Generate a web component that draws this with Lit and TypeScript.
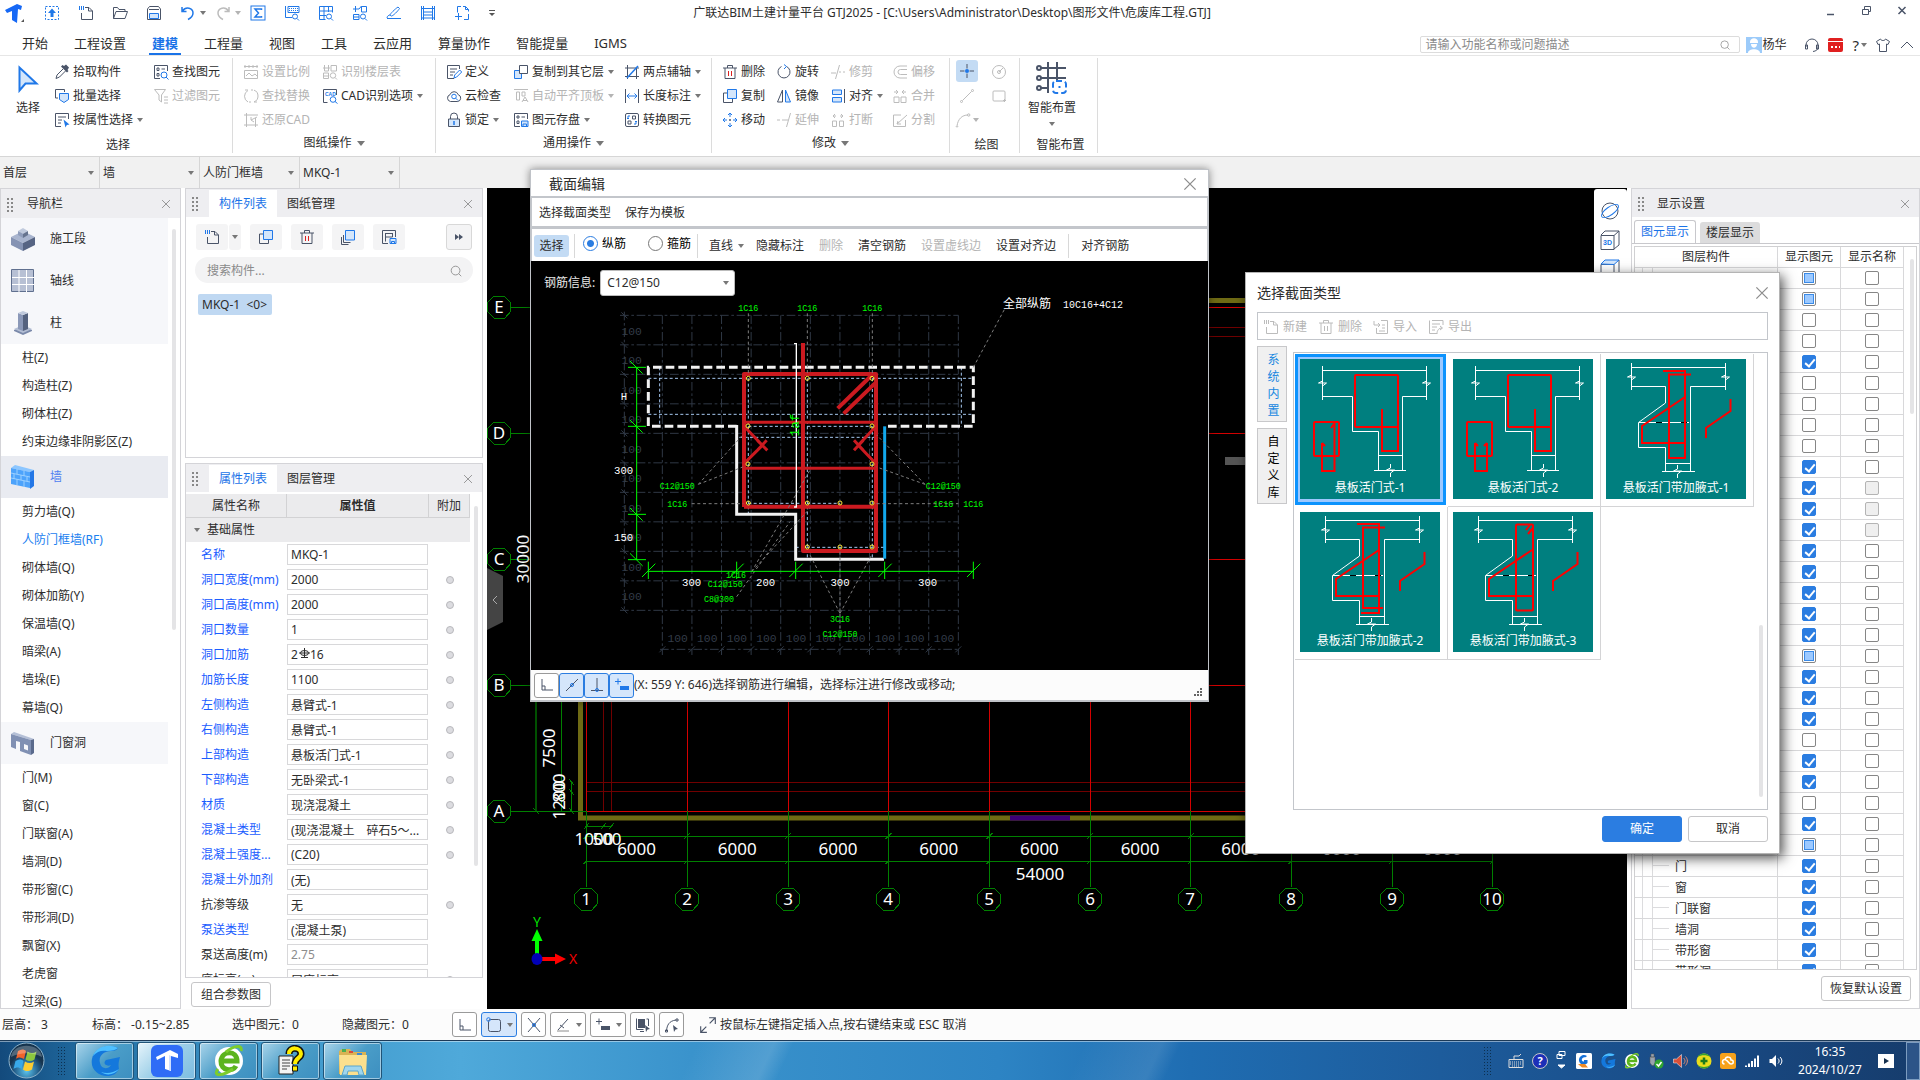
import { LitElement, html, svg, css, nothing } from "lit";
import { customElement, state } from "lit/decorators.js";
import { classMap } from "lit/directives/class-map.js";

/* ---------- icons: 16 x 16 line drawings ---------- */
/* k: slate stroke, b: blue stroke, g: grey stroke, f*: fills */
const ICONS: Record<string, unknown> = {
  pick: svg`<path class="fk" d="M10 2l2-1.5 3 3L13.500 6l1 1-1.5 1.5-6-6L8.500 1z"/><path class="k" d="M9 5L3 11l-1 3.500L5.500 13l6-6"/>`,
  batch: svg`<path class="k" d="M4 10H1.500V1.500h9V4"/><path class="fl" d="M5.500 5.500h9v6l-4.500 3-4.500-3z"/>`,
  byprop: svg`<path class="k" d="M14.500 7V1.500h-13v13H7M4 5h8M4 8h4M4 11h3"/><path class="fb" d="M9.500 7.500l6 5-2.700.4L11.500 15.500z"/>`,
  find: svg`<path class="k" d="M7 14.500H1.500v-13h13V7M4 4h2v2.500H4zM4 9.500h2V12H4zM8.500 5H12"/><circle class="b" cx="11" cy="11" r="3"/><path class="b" d="M13 13l2.500 2.500"/>`,
  filter: svg`<path class="g" d="M1.500 1.500h11L8.500 7v7L6 12V7zM11 9h4M11 12h4M11 15h4"/>`,
  scale: svg`<path class="g" d="M1 2.500h14M2 1v3M6 1v3M10 1v3M14 1v3M1.500 6.500h13v8h-13zM3 12l3-3 3 3 3-2 2 2"/>`,
  replace: svg`<path class="g" d="M5 14A6.500 6.500 0 0 1 5 2.500M11 2a6.500 6.500 0 0 1 0 12M5 2l-3 0M11 14h3M8 2h2M6 14h2"/>`,
  restore: svg`<path class="g" d="M1 3h14M3.500 1v14M1 13h14M12.500 6v9M14 5L8 8l3 2M8 8v-3"/>`,
  floor: svg`<path class="g" d="M2.500 1v6h4V1M1 4h7M9 1.500h5.500V7H9zM1.500 9h5v5.500h-5zM1.500 12h5"/><circle class="g" cx="11" cy="11.500" r="2.700"/><path class="g" d="M13 13.500l2 2"/>`,
  cad: svg`<path class="k" d="M5.500 14.500h-4v-13h13V7"/><text x="3" y="8" class="cadtxt">CAD</text><circle class="b" cx="11" cy="11.500" r="2.800"/><path class="b" d="M13 13.500l2.500 2"/>`,
  define: svg`<path class="k" d="M8 14.500H1.500v-13h12V5M4 5h7M4 8h5M4 11h3"/><path class="b" d="M8 14l.7-3 5-5 2 2-5 5z"/>`,
  cloud: svg`<path class="k" d="M4.500 13.500a3.500 3.500 0 0 1-.5-6.800 4.300 4.300 0 0 1 8.200 0 3.500 3.500 0 0 1-.4 6.800z"/><circle class="b" cx="8" cy="8.500" r="2.300"/><path class="b" d="M9.700 10.200L12 12.500"/>`,
  lock: svg`<path class="k" d="M4.500 7V4.500a3.500 3.500 0 0 1 7 0V7"/><path class="fl2" d="M2.500 7h11v7.500h-11z"/><path class="b w2" d="M8 9v4"/>`,
  copyto: svg`<path class="fl" d="M1.500 6.500h7v8h-7z"/><path class="k wf" d="M6.500 1.500h8v8h-8z"/>`,
  flush: svg`<path class="g" d="M1 1.500h14M3.500 4h3v8h-3zM9 4h3v4H9zM9 14l3-5 3 5M10 12.500h4"/>`,
  save: svg`<path class="k" d="M7 14.500H1.500v-13h13V7M4 4h2v2H4zM4 9h2v2.500H4zM8.500 5H12"/><path class="fl" d="M8.500 9h6.500v5.500H8.500zM10 12h3.500v2.500H10z"/>`,
  twopt: svg`<path class="k" d="M1 4h14M3.500 1v14M1 12.500h14M12.500 4v11"/><path class="b w2" d="M3 14L14 2"/>`,
  length: svg`<path class="k" d="M1.500 1v14M14.500 1v14"/><path class="b" d="M3 8h10M5.500 5.500L3 8l2.500 2.500M10.500 5.500L13 8l-2.500 2.500"/>`,
  convert: svg`<rect class="k" x="1.500" y="1.500" width="13" height="13" rx="1.500"/><path class="k" d="M8.500 4h3v3h-3zM4 9h3v3H4z"/><path class="b" d="M6 4H4v3M10 12h2V9M3 6l1 1 1-1M11 10l1-1 1 1"/>`,
  del: svg`<path class="k" d="M1 4h14M5.500 4V1.500h5V4M3 4v10.500h10V4"/><path class="r" d="M6.500 7v5M9.500 7v5"/>`,
  delg: svg`<path class="g" d="M1 4h14M5.500 4V1.500h5V4M3 4v10.500h10V4M6.500 7v5M9.500 7v5"/>`,
  copy: svg`<path class="k" d="M5 5H1.500v9.500h9V11"/><path class="fl" d="M5.500 1.500h9v9h-9z"/>`,
  copies: svg`<path class="k" d="M3.500 6v7.500h7M1.500 8v7.500h7"/><path class="fl" d="M5.500 1.500h9v9.500h-9z"/>`,
  move: svg`<path class="b" d="M8 1v4M8 11v4M1 8h4M11 8h4M6 3l2-2 2 2M6 13l2 2 2-2M3 6L1 8l2 2M13 6l2 2-2 2"/><path class="k" d="M8 7v2M7 8h2"/>`,
  rotate: svg`<path class="k" d="M5.500 2.500a6 6 0 1 0 5 0"/><path class="b" d="M8 .5l2.500 2L8 5"/>`,
  mirror: svg`<path class="k" d="M6.500 2v12h-5z"/><path class="fl" d="M9.500 2v12h5z"/>`,
  extend: svg`<path class="g" d="M1 8h3M6 8h6M14.500 1l-4 14"/>`,
  trim: svg`<path class="g" d="M1 9h5M9.500 1l-4 14M9 8h2M13 8h2"/>`,
  align: svg`<path class="fl" d="M2.500 2h9v4.500h-9zM2.500 9.500h9V14h-9z"/><path class="k" d="M14.500 1v14"/>`,
  brk: svg`<path class="g" d="M2.500 9h4v5.500h-4zM9.500 9h4v5.500h-4zM3 4h3M3 4l2-2M3 4l2 2M13 4h-3M13 4l-2-2M13 4l-2 2"/>`,
  offset: svg`<path class="g" d="M15 2H8a6 6 0 0 0 0 12h7M15 5.500H8.500a2.500 2.500 0 0 0 0 5H15"/>`,
  merge: svg`<path class="g" d="M2 9h5v5.500H2zM9 9h5v5.500H9zM2 4h4M6 4L4 2M6 4L4 6M14 4h-4M10 4l2-2M10 4l2 2"/>`,
  split: svg`<path class="g" d="M9 3H1.500v11.500h12V8M5 12l10-9M5 12l1-3M5 12l4 0"/>`,
  circle: svg`<circle class="g" cx="8" cy="8" r="6.500"/><path class="g" d="M8 8l4-4M6.500 8a1.500 1.500 0 1 0 3 0 1.500 1.500 0 1 0-3 0"/>`,
  point: svg`<path class="k" d="M8 1v4.500M8 10.500V15M1 8h4.500M10.500 8H15"/><circle class="fb" cx="8" cy="8" r="2"/>`,
  line: svg`<path class="g" d="M3.500 12.500l9-9M1.500 13.500a1 1 0 1 0 2 0 1 1 0 1 0-2 0M12.500 2.500a1 1 0 1 0 2 0 1 1 0 1 0-2 0"/>`,
  rect: svg`<rect class="g" x="2" y="3" width="12" height="10" rx="1"/><path class="g" d="M12 12.500h3M13.500 11v3"/>`,
  arc: svg`<path class="g" d="M2 14C3 7 7 3 13 3M1 14a1 1 0 1 0 2 0M12.500 3a1.200 1.200 0 1 0 2.400 0 1.200 1.200 0 1 0-2.400 0"/>`,
  newf: svg`<path class="k" d="M7 2.500h4l3.500 3.500v8.500h-11V8M10.500 2.500V6h4"/><path class="b" stroke-dasharray="1 1" d="M1 1.500h5M1 2.500h5M1 3.500h5M1 4.500h5"/>`,
  newg: svg`<path class="g" d="M7 2.500h4l3.500 3.500v8.500h-11V8M10.500 2.500V6h4"/><path class="g" stroke-dasharray="1 1" d="M1 1.500h5M1 2.500h5M1 3.500h5M1 4.500h5"/>`,
  impg: svg`<path class="g" d="M8 1.500h6.500v13h-11V9M1 2v4h6M5 4l2 2-2 2M9 6h3M9 9h3M6 12h6"/>`,
  expg: svg`<path class="g" d="M9 14.500H1.500v-13M4 1.500h11V6M4 5h8M4 8h5M4 11h3M9 15c0-4 2-6 5-6M12 7l2.500 2L12 11"/>`,
  tmpl: svg`<path class="k" d="M7 14.500H1.500v-13h13V8M4 4.500h8M4.500 8h7V4.500M4.500 4.500v8"/><path class="fl" d="M9 9.500h6v5H9zM10.500 12.500h3v2h-3z"/>`,
  search: svg`<circle class="m" cx="7.500" cy="7.500" r="5"/><path class="m" d="M11 11l3 3"/>`,
  up: svg`<rect class="b" x="1.500" y="1.500" width="13" height="13" stroke-dasharray="2 1.500"/><path class="fb" d="M8 3.500L12 8H9.500v4h-3V8H4z"/>`,
  open: svg`<path class="k" d="M1.500 13.500v-11h4l1.500 2h6v2M1.500 13.500L4 6.500h11.500L13 13.500z"/>`,
  disk: svg`<path class="k" d="M1.500 4l2-2.500h9l2 2.500v10.500h-13zM3 4.500h10"/><path class="fl" d="M3.500 8.500h9v5h-9z"/>`,
  undo: svg`<path class="b w2" d="M2 2v4.500h4.500M2.500 6C6 1 13 3 13 8c0 4-3 5.500-5 6.500"/>`,
  redo: svg`<path class="g w2" d="M14 2v4.500H9.500M13.500 6C10 1 3 3 3 8c0 4 3 5.500 5 6.500"/>`,
  sum: svg`<rect class="b" x="1" y="1" width="14" height="14"/><path class="b w2" d="M11.500 5V4H5l3.500 4L5 12h6.500v-1"/>`,
  q1: svg`<path class="b" d="M1.500 1v11.500H8M4 1.500h11v6H4z"/><path class="b" stroke-dasharray="1 1" d="M5 3.500h9M5 5.500h9"/><circle class="b" cx="11" cy="11.500" r="2.500"/><path class="b" d="M13 13.500l2 2"/>`,
  q2: svg`<path class="b" d="M1.500 1.500h13v6M1.500 1.500v13h6M1.500 6h13M1.500 10.500H8M6 1.500v13M10.500 1.500V7"/><circle class="b" cx="11" cy="11.500" r="2.500"/><path class="b" d="M13 13.500l2 2"/>`,
  q3: svg`<path class="b" d="M3.500 1v6M1 4h6M9.500 1.500h5V7h-5zM1.500 9.500h5.500v5H1.500zM9.500 1L7 4M1 12h6"/><circle class="b" cx="11" cy="11.500" r="2.500"/><path class="b" d="M13 13.500l2 2"/>`,
  pen: svg`<path class="b" d="M1 13.500h14M4 10c0-1 5-6 8-8l1.500 1.500C12 6 7 11 5.500 11zM1 13c0-2 2-3 3-3"/>`,
  fence: svg`<path class="b" d="M3.500 1v14M12.500 1v14M1 3.500h14M3 7h10M3 10h10M1 13h14M1.500 1v14M14.500 1v14"/>`,
  frame: svg`<path class="b" d="M7 1.500H3.500v6M9 1.500h2.500l3 3v2M11.500 1.500v3h3M14.500 9v5.500H10M1 11.500h7M4.500 8v7"/>`,
  ortho: svg`<path class="k" d="M3 2v11h11M3 9h3v4"/>`,
  slash: svg`<path class="k" d="M2 14L14 2"/><circle class="b" cx="8" cy="8" r="1.500"/>`,
  perp: svg`<path class="k" d="M8 1v12M2 13.500h12"/><circle class="b" cx="8" cy="13" r="1.500"/>`,
  plusbar: svg`<path class="b" d="M1 4.500h6M4 1.500v6"/><path class="fb" d="M6 9h9v4H6z"/>`,
  plusbark: svg`<path class="k" d="M1 4.500h6M4 1.500v6"/><path class="fk" d="M6 9h9v4H6z"/>`,
  snap: svg`<rect class="k" x="2.500" y="2.500" width="12" height="12" rx="2"/><circle class="b" cx="2.500" cy="2.500" r="1.800"/>`,
  cross: svg`<path class="k" d="M2 1l12 14M14 1L2 15"/><circle class="b" cx="8" cy="8" r="1.500"/>`,
  angle: svg`<path class="k" d="M13 2L3 13M5 8l4 3"/><path class="m" d="M2 14h12"/>`,
  layers: svg`<path class="fk" d="M3 2h7v9H3z"/><path class="k" d="M1.500 1.500v11h7M5 14.500h4M11.500 2h2v7"/><path class="fk" d="M10 8l5 4-2.500.5L11 15z"/>`,
  curve: svg`<path class="k" d="M2.500 14C3 8 5 4 12 3M1.500 13h2v2h-2zM12 2h2v2h-2z"/><path class="fk" d="M9 8l5 4-2.500.5L10 15z"/>`,
  expand: svg`<path class="k" d="M2 14L6.500 9.500M9.500 6.500L14 2M9 1.500h5.500V7M1.500 9v5.500H7"/>`,
  headset: svg`<path class="k" d="M2 10V8a6 6 0 0 1 12 0v2c0 3-2 4-5 4.500M1.500 8h2v4h-2zM12.500 8h2v4h-2z"/>`,
  shirt: svg`<path class="k" d="M5.500 2L1.500 4.500l1.500 3 1.500-.5v7.500h7V7l1.500.5 1.500-3L10.500 2C10 4 6 4 5.500 2z"/>`,
  chevup: svg`<path class="k" d="M2 11l6-6 6 6"/>`,
  close: svg`<path class="m" d="M3.500 3.500l9 9M12.500 3.500l-9 9"/>`,
};
const icon = (name: string, size = 16) =>
  html`<svg class="ic" width=${size} height=${size} viewBox="0 0 16 16" aria-hidden="true">${ICONS[name]}</svg>`;
const caret = html`<span class="caret"></span>`;

type Cmd = { i: string; t: string; off?: boolean; more?: boolean };
const c = (i: string, t: string, off = false, more = false): Cmd => ({ i, t, off, more });

const GROUPS: { cls: string; label: string; cols: Cmd[][] }[] = [
  { cls: "g2", label: "图纸操作", cols: [
    [c("scale", "设置比例", true), c("replace", "查找替换", true), c("restore", "还原CAD", true)],
    [c("floor", "识别楼层表", true), c("cad", "CAD识别选项", false, true)]] },
  { cls: "g3", label: "通用操作", cols: [
    [c("define", "定义"), c("cloud", "云检查"), c("lock", "锁定", false, true)],
    [c("copyto", "复制到其它层", false, true), c("flush", "自动平齐顶板", true, true), c("save", "图元存盘", false, true)],
    [c("twopt", "两点辅轴", false, true), c("length", "长度标注", false, true), c("convert", "转换图元")]] },
  { cls: "g4", label: "修改", cols: [
    [c("del", "删除"), c("copy", "复制"), c("move", "移动")],
    [c("rotate", "旋转"), c("mirror", "镜像"), c("extend", "延伸", true)],
    [c("trim", "修剪", true), c("align", "对齐", false, true), c("brk", "打断", true)],
    [c("offset", "偏移", true), c("merge", "合并", true), c("split", "分割", true)]] },
];
const TABS = ["开始", "工程设置", "建模", "工程量", "视图", "工具", "云应用", "算量协作", "智能提量", "IGMS"];

const NAV: { name: string; art: string; items: string[] }[] = [
  { name: "施工段", art: "block", items: [] },
  { name: "轴线", art: "grid", items: [] },
  { name: "柱", art: "column", items: ["柱(Z)", "构造柱(Z)", "砌体柱(Z)", "约束边缘非阴影区(Z)"] },
  { name: "墙", art: "wall", items: ["剪力墙(Q)", "人防门框墙(RF)", "砌体墙(Q)", "砌体加筋(Y)", "保温墙(Q)", "暗梁(A)", "墙垛(E)", "幕墙(Q)"] },
  { name: "门窗洞", art: "door", items: ["门(M)", "窗(C)", "门联窗(A)", "墙洞(D)", "带形窗(C)", "带形洞(D)", "飘窗(X)", "老虎窗", "过梁(G)"] },
];
const ART: Record<string, unknown> = {
  block: svg`<path fill="#a9b5cf" d="M0 10l12-6 12 6-12 6z"/><path fill="#8593b3" d="M0 10l12 6v8L0 18z"/><path fill="#566483" d="M24 10l-12 6v8l12-6z"/><path fill="#c0cadd" d="M7 4l5-3 5 3-5 3z"/><path fill="#8f9dbb" d="M7 4l5 3v4L7 8z"/><path fill="#66748f" d="M17 4l-5 3v4l5-3z"/>`,
  grid: svg`<path fill="#b7c0d4" stroke="#60708f" d="M.5.500h22v22H.5z"/><path stroke="#fff" d="M8 1v22M15.500 1v22M1 8.500h22M1 15.500h22"/>`,
  column: svg`<path fill="#7a89aa" d="M3 19l9-4 9 4v1l-9 4-9-4z"/><path fill="#b3bed4" d="M3 18l9-4 9 4-9 4z"/><path fill="#8a98b8" d="M7 2l5 2v16l-5-2z"/><path fill="#54627f" d="M17 2l-5 2v16l5-2z"/><path fill="#c0cadd" d="M7 2l5-2 5 2-5 2z"/>`,
  wall: svg`<path fill="#8cc6ff" d="M0 3l4-3 19 5-4 2z"/><path fill="#4da3fb" d="M0 3l19 4v16L0 19z"/><path fill="#2477e6" d="M19 7l4-2v16l-4 3z"/><path stroke="#9bd0ff" fill="none" d="M0 8l19 4M0 13l19 4M6 4v5M13 6v5M3 9v5M10 10v5M16 12v4M6 14v6M13 16v6"/>`,
  door: svg`<path fill="#b4bfd6" d="M0 3l3-2 20 7-3 1z"/><path fill="#8090b3" d="M0 3l20 6v15L9 20v-9l-4-1v8l-5-2zM13 13v5l4 1.500v-5z" fill-rule="evenodd"/><path fill="#5a6a8c" d="M20 9l3-1v14l-3 2z"/>`,
};

type Prop = { k: string; v: string; dot?: boolean; plain?: boolean; rebar?: boolean; ghost?: boolean };
const PROPS: Prop[] = [
  { k: "名称", v: "MKQ-1" },
  { k: "洞口宽度(mm)", v: "2000", dot: true },
  { k: "洞口高度(mm)", v: "2000", dot: true },
  { k: "洞口数量", v: "1", dot: true },
  { k: "洞口加筋", v: "", dot: true, rebar: true },
  { k: "加筋长度", v: "1100", dot: true },
  { k: "左侧构造", v: "悬臂式-1", dot: true },
  { k: "右侧构造", v: "悬臂式-1", dot: true },
  { k: "上部构造", v: "悬板活门式-1", dot: true },
  { k: "下部构造", v: "无卧梁式-1", dot: true },
  { k: "材质", v: "现浇混凝土", dot: true },
  { k: "混凝土类型", v: "(现浇混凝土　碎石5～...", dot: true },
  { k: "混凝土强度...", v: "(C20)", dot: true },
  { k: "混凝土外加剂", v: "(无)" },
  { k: "抗渗等级", v: "无", dot: true, plain: true },
  { k: "泵送类型", v: "(混凝土泵)" },
  { k: "泵送高度(m)", v: "2.75", plain: true, ghost: true },
  { k: "底标高(m)", v: "层底标高", plain: true, dot: true },
];

/* one letter per layer: p partly shown, 1 shown, 0 hidden */
const LAYER_STATE = "pp0010000111111111p11101101p111111";
const LAYER_NAMES: Record<number, string> = { 28: "门", 29: "窗", 30: "门联窗", 31: "墙洞", 32: "带形窗", 33: "带形洞" };
const LAYERS = [...LAYER_STATE].map((shown, n) => ({ name: LAYER_NAMES[n] ?? "", shown, locked: n >= 10 && n <= 12 }));

const THUMBS = ["悬板活门式-1", "悬板活门式-2", "悬板活门带加腋式-1", "悬板活门带加腋式-2", "悬板活门带加腋式-3"];

const zig = (x: number, y: number) => svg`<path d="M${x} ${y - 6}v4l-4 2h8l-4 3v4"/>`;
const thumbArt = (n: number) => n < 2
  ? svg`<g class="tw"><path d="M22.500 7v34M126.500 7v34M22.500 11.500h104M22.500 37.500H52.500V72.500H78.500V111.500M102.500 111.500V37.500H126.500M78.500 96.500h24M74 111.500h32"/>${zig(22.5, 24)}${zig(126.5, 24)}${zig(90.5, 111)}</g>
    <g class="tr"><rect x="55" y="16" width="43" height="52" rx="1"/><path d="M82 50v42h16V68"/><rect x="14" y="63" width="25" height="34" rx="1"/>${n === 0
      ? svg`<path d="M22 84v28h12.500V64M22 84l3 3M34 65l-3 4"/>`
      : svg`<path d="M22 84v28h12V84M22 84l3 3M34 84l-3 3"/>`}</g>`
  : svg`<g class="tw"><path d="M25.500 4v27M119.500 4v27M25.500 8.500h94M25.500 27.500H59.500V44L32.500 63.500V88.500H59.500V112M119.500 27.500H84.500V112M59.500 104.500h25M56 112.500h33M33 63.500h50"/>${zig(25.5, 18)}${zig(119.5, 18)}${zig(71.5, 112)}</g>
    <path stroke="#000" d="M50 63.500h6M75 63.500h6"/>
    <g class="tr"><path d="M79 38L36 67V84H79M124.500 40V52L100 69V79"/>${n === 2
      ? svg`<path d="M57 12h22v87H63V15.500h22"/>`
      : n === 3 ? svg`<path d="M57 12h22v89H61M85 15.500H63V96h20"/>`
      : svg`<rect x="63" y="12.500" width="17" height="86" rx="1"/><path d="M73 18l4-5M75 22l5-6"/>`}</g>`;

/* ---------- model view ---------- */
const AXIS = Array.from({ length: 10 }, (_, n) => 586.6 + 100.7 * n);
const ROWS: [string, number][] = [["E", 307], ["D", 433], ["C", 559], ["B", 685], ["A", 811]];
const bubble = (x: number, y: number, t: string) => svg`
  <polygon class="ln gr" points="${x - 5},${y - 11} ${x + 5},${y - 11} ${x + 11},${y - 5} ${x + 12},${y + 4} ${x + 6},${y + 11} ${x - 5},${y + 11} ${x - 12},${y + 4} ${x - 11},${y - 5}"/>
  <text class="mt" x=${x} y=${y + 6}>${t}</text>`;
const modelView = () => svg`
<g transform="translate(-487,-188)">
  <g class="ln dr"><path d="M586 327H1627M586 336H1627M586 782.500H1627M586 791.500H1627M603.500 307V811M611.500 307V811M1090.500 307V811"/></g>
  <g class="ln rd">
    ${AXIS.map((x) => svg`<path d="M${x} 307V811"/>`)}
    ${ROWS.map(([, y]) => svg`<path d="M586 ${y}.500H1627"/>`)}
  </g>
  <path d="M580.500 301V818H1560M578 300.500H1560" fill="none" stroke="#6e6a14" stroke-width="5"/>
  <path d="M1010 818H1070" stroke="#3c0078" stroke-width="5"/>
  <g class="ln gr">
    ${ROWS.map(([, y]) => svg`<path d="M511 ${y}.500H586"/>`)}
    ${AXIS.map((x) => svg`<path d="M${x} 811V887M${x - 3} 839l6-6M${x - 3} 864l3-3"/>`)}
    <path d="M586 836.500H1493M586 861.500H1493M586 826.500H611M584 829l5-6M601 829l5-6M609 829l5-6M561.500 307V811M571.500 782V811M569 779l5 6M569 789l5 6M569 808l5 6M533 808l6 6"/>
    <path d="M536 307V811" stroke-width="2" stroke="#005000"/>
  </g>
  ${ROWS.map(([t, y]) => bubble(499, y, t))}
  ${AXIS.map((x, n) => bubble(Math.floor(x), 899, String(n + 1)))}
  ${AXIS.slice(0, 9).map((x) => svg`<text class="mt" x=${x + 50} y="855">6000</text>`)}
  <text class="mt" x="1040" y="880">54000</text>
  <text class="mt" x="594" y="845">1000</text><text class="mt" x="607" y="845">500</text>
  <text class="mt" transform="translate(529,559) rotate(-90)">30000</text>
  <text class="mt" transform="translate(555,748) rotate(-90)">7500</text>
  <text class="mt" transform="translate(565,800) rotate(-90)">1200</text>
  <text class="mt" transform="translate(565,788) rotate(-90)">800</text>
  <path d="M1225 457h20v8h-20z" fill="#555"/>
  <path d="M487 568l16 8v46l-16 8z" fill="#444"/><path d="M497 596l-4 4 4 4" fill="none" stroke="#aaa"/>
  <path d="M537 955V939" stroke="#0f0" stroke-width="4"/><path d="M537 929l5.500 12h-11z" fill="#0f0"/>
  <path d="M540 959H556" stroke="red" stroke-width="4"/><path d="M566 959l-11-5.500v11z" fill="red"/>
  <ellipse cx="537" cy="959" rx="5.500" ry="6" fill="#0000b8"/>
  <text class="mt ax ay" x="537" y="927">Y</text><text class="mt ax" x="573" y="964">X</text>
</g>`;

/* ---------- section drawing, drafted at three units a pixel ---------- */
const section = () => {
  const gx = Array.from({ length: 11 }, (_, n) => 157 + 88.8 * n);
  const gy = Array.from({ length: 11 }, (_, n) => 61 + 88.5 * n);
  const dots: [number, number][] = [[415, 250], [592, 250], [786, 250], [414, 393], [786, 393], [414, 507], [786, 507], [415, 624], [592, 624], [690, 624], [786, 624], [592, 756], [690, 756], [786, 756]];
  return svg`
<g transform="translate(79,34) scale(.33333)" fill="none">
  <g stroke="#2f3845" stroke-width="3">
    <g stroke-dasharray="26 8 8 8">${gx.map((x) => svg`<path d="M${x} 61V1080"/>`)}${gy.map((y) => svg`<path d="M30 ${y}H1045"/>`)}<path d="M43 50V950M150 1063H1050"/></g>
    ${gx.map((x) => svg`<path d="M${x - 9} 1072l18-18"/>`)}${gy.map((y) => svg`<path d="M34 ${y - 9}l18 18"/>`)}
  </g>
  <g class="st sg">${gx.slice(0, 10).map((x) => svg`<text x=${x + 46} y="1040">100</text>`)}${gy.slice(0, 10).map((y) => svg`<text x="65" y=${y + 58}>100</text>`)}</g>
  <g stroke="#a6c8f0" stroke-width="3" stroke-dasharray="9 7">
    <path d="M115 250H1090M115 358H1090M149 217V394M1054 217V394M415 394H786M388 427H800M415 250V655M415 625H690M592 250V790M787 250V790M557 757H822"/>
  </g>
  <g stroke="#f2f2f2" stroke-width="9"><path stroke-dasharray="26 12" d="M380 394H115V217H1090V394H822"/><path d="M380 390V658H557V793H822"/></g>
  <path d="M824 394V791" stroke="#12a8ec" stroke-width="9"/>
  <g stroke="#cb1a20" stroke-width="12" stroke-linejoin="round">
    <path d="M402 636V237H798V768H579V144M402 635H798"/>
    <path stroke-width="9" d="M402 382H798M402 520H798M408 400L457 451L408 500M442 466l28-30M442 436l30 30M792 400L745 451L792 500M732 436l28 30M760 436l-28 30"/>
    <path d="M786 240L683 340M798 262L701 356"/>
  </g>
  <g stroke="#7d7d7d" stroke-width="3" stroke-dasharray="9 8">
    <path d="M415 55V240M592 55V240M787 55V240M1090 217L1185 40M265 568L398 420M265 568L398 516M945 568L800 420M945 568L800 516M245 626H400M800 626H1045M425 830L600 525M425 830L600 640M380 905L540 680M690 955L600 780M690 955L785 780M690 770V1010"/>
  </g>
  <path d="M559 144V638M552 146h8M552 636h8" stroke="#fff" stroke-width="4"/>
  <g stroke="#ffe83b" stroke-width="3">${dots.map(([x, y]) => svg`<circle cx=${x} cy=${y} r="6"/>`)}</g>
  <g stroke="#0f0" stroke-width="3">
    <path d="M80 217V794M54 217H108M54 394H108M54 658H108M54 794H108M115 829H1090M115 800V852M380 800V852M557 800V852M824 800V852M1090 800V852"/>
    ${[217, 394, 658, 794].map((y) => svg`<path d="M60 ${y - 19}l38 38"/>`)}
    ${[115, 380, 557, 824, 1090].map((x) => svg`<path d="M${x - 19} 846l40-40"/>`)}
  </g>
  <g class="st sgr">
    <text x="415" y="47">1C16</text><text x="592" y="47">1C16</text><text x="787" y="47">1C16</text>
    <text x="202" y="581">C12@150</text><text x="202" y="635">1C16</text>
    <text x="1000" y="581">C12@150</text><text x="1000" y="635">1C16</text><text x="1090" y="635">1C16</text>
    <text x="378" y="848">1C16</text><text x="346" y="875">C12@150</text><text x="327" y="920">C8@300</text>
    <text x="690" y="980">3C16</text><text x="690" y="1026">C12@150</text>
    <text class="big" transform="translate(566,390) rotate(-90)">1af</text>
  </g>
  <g class="st sw">
    <text x="42" y="314">H</text><text x="41" y="537">300</text><text x="41" y="738">150</text>
    <text x="245" y="873">300</text><text x="467" y="873">200</text><text x="690" y="873">300</text><text x="953" y="873">300</text>
  </g>
</g>
<text class="note" x="472" y="47">全部纵筋</text><text class="note mono" x="532" y="47">10C16+4C12</text>`;
};

/* ---------- taskbar artwork, 32 x 32 ---------- */
const gcloud = svg`<path fill="#1478dc" d="M29 3C19-2 5 3 3 14c-2 10 6 17 15 17 6 0 9-2 12-7-1-5 0-8 1-12l-14 3c-4 4 1 7 5 5-3 5-10 4-11-2-2-7 4-12 11-12 4 0 6-1 7-3z"/><path fill="#4fc0ff" d="M29 3C19-2 7 2 4 11c4-5 9-6 14-5 5 0 9-1 11-3zM12 27c5 4 14 3 18-3-6 4-12 5-18 3z"/>`;
const ebrowser = svg`<circle cx="16" cy="16" r="14" fill="#fff"/><path fill="none" stroke="#5cb41e" stroke-width="5" d="M8 16h16c0-11-15-11-16 0-.5 10 12 11 15 5"/><path fill="none" stroke="#7ccc2c" stroke-width="3" d="M5 24C-1 32 10 31 20 24M28 6C30-1 20 1 13 7"/>`;
const APPS: { name: string; art: unknown; on?: boolean }[] = [
  { name: "云桌面", art: gcloud },
  { name: "土建计量", on: true, art: svg`<rect width="32" height="32" rx="6" fill="#2f6cf6"/><path fill="#fff" d="M5 12L19 5l8 4v4l-7-2v15l-6-2V11L6 15z"/><path fill="#cfe0ff" d="M20 11v15l-2-1V10z"/>` },
  { name: "浏览器", art: ebrowser },
  { name: "帮助", art: svg`<path fill="#f4f4f4" stroke="#222" d="M4 11h14v18H4z"/><path stroke="#444" d="M7 15h8M7 18h8M7 21h8M7 24h5"/><path fill="none" stroke="#111" stroke-width="7" d="M14 9c0-8 12-7 12 0 0 4-6 4-6 10"/><path fill="none" stroke="#ffee00" stroke-width="4" d="M14 9c0-8 12-7 12 0 0 4-6 4-6 10"/><path fill="#fe0" stroke="#111" d="M17.500 21h5v5h-5z"/>` },
  { name: "资源管理器", art: svg`<path fill="#d9b354" d="M2 6l3-2h8l2 3h14v22H2z"/><path fill="#4caf50" d="M5 4h4v3H5z"/><path fill="#d84a3a" d="M12 6h4v2h-4z"/><path fill="#3a8ad8" d="M20 8h5v2h-5z"/><path fill="#fbe08e" d="M2 10h28l-1 20H3z"/><path fill="#9fd6ee" stroke="#5aa6cc" d="M8 21h16l3 9h-5l-1-4H11l-1 4H5z"/>` },
];
const TRAY: { name: string; art: unknown }[] = [
  { name: "广联达云", art: svg`<rect width="32" height="32" rx="3" fill="#fff"/><path fill="#1671d8" d="M22 6C14 1 5 7 6 16c2 8 11 9 17 4v-6h-7v3c-4 1-7-5-1-8 3-1 5 0 7-3z"/><path fill="#f08a24" d="M4 22l8 7h12l-6-7z"/>` },
  { name: "云桌面", art: gcloud },
  { name: "浏览器", art: ebrowser },
  { name: "安全弹出", art: svg`<path fill="#9aa4ae" stroke="#555" d="M4 8h10v12l-3 5H8l-4-5zM6 2h6v6H6z"/><circle cx="22" cy="22" r="9" fill="#2fa52f"/><path fill="none" stroke="#fff" stroke-width="3" d="M17 22l4 4 6-8"/>` },
  { name: "音频", art: svg`<path fill="#d8503a" stroke="#fff" d="M3 12h6l10-9v26l-10-9H3z"/><path fill="none" stroke="#e08a70" stroke-width="2" d="M23 10c4 4 4 8 0 12M27 7c5 6 5 12 0 18"/>` },
  { name: "安全卫士", art: svg`<circle cx="16" cy="16" r="15" fill="#e9dc1c"/><path fill="#35a035" d="M3 8C9-2 24-1 29 8c-8-5-18-5-26 0zM3 24c6 9 21 9 26 0-8 5-18 5-26 0z"/><path stroke="#1c7a1c" stroke-width="5" d="M16 9v14M9 16h14"/>` },
  { name: "云盘", art: svg`<rect width="32" height="32" rx="5" fill="#f7a21b"/><path fill="none" stroke="#fff" stroke-width="3" d="M9 22c-6-1-5-9 1-9 2-7 12-6 12 1 6 0 6 8 0 8-5 0-6-8-11-8"/>` },
  { name: "网络", art: svg`<path fill="#fff" d="M2 25h4v3H2zM8 21h4v7H8zM14 16h4v12h-4zM20 11h4v17h-4zM26 5h4v23h-4z"/>` },
  { name: "音量", art: svg`<path fill="#fff" d="M3 12h5l8-8v24l-8-8H3z"/><path fill="none" stroke="#fff" stroke-width="2" d="M20 11c3 3 3 7 0 10M24 8c5 5 5 11 0 16"/>` },
];

@customElement("app-root")
export class AppRoot extends LitElement {
  @state() private ribbonTab = "建模";
  @state() private picked = 0;

  static styles = css`
    :host { display: block; height: 100vh; font: 12px/16px "Noto Sans", "Noto Sans CJK SC", sans-serif; color: #2d2d2d; }
    * { box-sizing: border-box; }
    button, input, select { font: inherit; color: inherit; margin: 0; padding: 0; border: 0; background: none; border-radius: 0; }
    button { white-space: nowrap; cursor: pointer; }
    a { color: inherit; text-decoration: none; }
    svg { display: block; flex: none; }
    .app { position: relative; display: flex; flex-direction: column; height: 100%; overflow: hidden; background: #fff; }
    .ic * { fill: none; stroke-width: 1; }
    .ic .k { stroke: #4a5468; } .ic .b { stroke: #2078e8; } .ic .g { stroke: #bcbcbc; } .ic .m { stroke: #8c8c8c; } .ic .r { stroke: #d22; }
    .ic .w2 { stroke-width: 1.500; } .ic .wf { fill: #fff; }
    .ic .fk { fill: #4a5468; } .ic .fb { fill: #2078e8; }
    .ic .fl { fill: #d4e6fb; stroke: #2078e8; } .ic .fl2 { fill: #d4e6fb; stroke: #4a5468; }
    .ic .cadtxt { fill: #2078e8; font: bold 5px "Liberation Sans", sans-serif; }
    .caret { display: inline-block; border: 3px solid transparent; border-top: 4px solid #777; border-bottom: 0; flex: none; }
    .row { display: flex; align-items: center; }

    /* title bar and tabs */
    .title { display: flex; align-items: center; height: 26px; flex: none; }
    .quick { display: flex; align-items: center; gap: 18px; padding-left: 4px; flex: 1; }
    .quick .pair { display: flex; align-items: center; gap: 4px; margin-right: -9px; }
    .quick .logo { margin-right: 2px; }
    .title h1 { font-size: 12px; font-weight: normal; margin: 0 10px 0 0; flex: none; }
    .wins { flex: 1; display: flex; justify-content: flex-end; gap: 20px; padding: 0 10px 4px 0; }
    .tabs { display: flex; height: 30px; padding-left: 9px; border-bottom: 1px solid #e6e6e6; flex: none; }
    .tabs nav { display: flex; flex: 1; }
    .tab { position: relative; font-size: 13px; padding: 8px 13px 0; line-height: 18px; display: block; }
    .tab.on { color: #1a73e8; font-weight: bold; }
    .tab.on::after { content: ""; position: absolute; left: 10px; right: 10px; bottom: 0; height: 2px; background: #1a73e8; }
    .user { display: flex; align-items: center; gap: 8px; padding: 8px 5px 0 0; }
    .ask { display: flex; align-items: center; width: 320px; height: 17px; border: 1px solid #dcdcdc; border-radius: 2px; padding: 0 8px 0 4px; }
    .ask input { flex: 1; min-width: 0; outline: 0; }
    .ask input::placeholder, .find input::placeholder { color: #8a8a8a; opacity: 1; }
    .who { margin: 0 10px 0 -2px; gap: 0; }
    .help { font-size: 15px; gap: 2px; }

    /* ribbon */
    .ribbon { display: flex; height: 100px; padding-top: 2px; flex: none; }
    .grp { display: flex; flex-direction: column; border-right: 1px solid #dcdcdc; margin-bottom: 4px; height: 95px; }
    .cols { display: grid; flex: 1; }
    .col { display: flex; flex-direction: column; padding-top: 2px; }
    .cmd { display: flex; align-items: center; gap: 3px; height: 24px; text-align: left; }
    .cmd .caret { margin-left: 1px; }
    .off { color: #b4b4b4; }
    .off .caret { border-top-color: #b4b4b4; }
    .cap { height: 20px; display: flex; align-items: center; justify-content: center; gap: 5px; }
    .cap .caret { border-width: 5px 4px 0; }
    .cap.low { padding: 3px 0 0 4px; }
    .g1 .cols { grid-template-columns: 44px 99px 79px; padding-left: 10px; }
    .g2 .cols { grid-template-columns: 79px 113px; padding-left: 10px; }
    .g3 .cols { grid-template-columns: 67px 111px 87px; padding-left: 10px; }
    .g4 .cols { grid-template-columns: 54px 54px 62px 56px; padding-left: 10px; }
    .g4 .cols { padding-right: 1px; }
    .g5 .cols { grid-template-columns: 32px 31px; padding-left: 6px; }
    .g6 { width: 78px; }
    .g6 .cols { padding-left: 2px; }
    .tool { width: 22px; height: 24px; display: flex; align-items: center; justify-content: center; gap: 2px; }
    .tool.on { background: #c3dbf4; border-radius: 3px; height: 22px; margin-bottom: 2px; }
    .bigcmd { display: flex; flex-direction: column; align-items: center; gap: 7px; padding-top: 7px; width: 36px; }
    .g6 .bigcmd { width: 60px; gap: 6px; padding-top: 4px; }

    /* context selectors */
    .ctx { display: flex; height: 32px; background: #f1f1f1; border-top: 1px solid #d6d6d6; flex: none; }
    .pick { display: flex; align-items: center; width: 100px; border-right: 1px solid #d6d6d6; padding: 0 5px 0 3px; }
    select { appearance: none; outline: 0; flex: 1; min-width: 0; }

    /* work area */
    .work { display: flex; flex: 1; min-height: 0; }
    .panel { position: relative; display: flex; flex-direction: column; border: 1px solid #d4d4d8; background: #fff; min-height: 0; overflow: hidden; }
    .phead { display: flex; align-items: center; height: 28px; padding: 1px 7px 0 0; background: #eeeef1; flex: none; }
    .grip { width: 8px; height: 15px; margin: 0 8px 0 5px; flex: none; background: radial-gradient(circle, #888 1px, transparent 1px) 0 0 / 4px 4px; }
    .phead .grow { flex: 1; }
    .ptab { height: 27px; padding: 0 10px; }
    .ptab.on { background: #fff; color: #1a73e8; }
    .mid .grip { margin-right: 10px; }
    .thumb { position: absolute; width: 4px; border-radius: 2px; background: #e4e4e6; }
    .navp { width: 181px; flex: none; }
    .navp .phead { height: 29px; }
    .navp .grip { margin-right: 13px; }
    .navlist { flex: 1; overflow: hidden; width: 167px; }
    .navp .thumb { right: 4px; top: 40px; height: 401px; }
    .ngrp { display: flex; align-items: center; gap: 15px; width: 100%; height: 42px; padding-left: 10px; background: #f6f7fa; }
    .ngrp.on { background: #e9ebf1; color: #4f80f0; }
    .nitem { display: flex; align-items: center; width: 100%; height: 28px; padding-left: 21px; }
    .nitem.on { color: #1a80f0; }
    .mid { width: 298px; margin: 0 4px; display: flex; flex-direction: column; flex: none; }
    .comp { flex: 0 0 270px; }
    .comp .bar { display: flex; gap: 9px; padding: 7px 10px 7px; }
    .tb { display: flex; align-items: center; justify-content: center; width: 32px; height: 26px; background: #f4f4f5; border-radius: 3px; }
    .tb.narrow { width: 12px; } .tb.more { width: 26px; border: 1px solid #d8d8d8; margin-left: auto; }
    .split { display: flex; gap: 1px; }
    .find { display: flex; align-items: center; height: 26px; margin: 0 9px; padding: 1px 10px 0 12px; border-radius: 13px; background: #f3f3f4; }
    .find input { flex: 1; min-width: 0; outline: 0; }
    .tag { align-self: flex-start; margin: 11px 12px; padding: 0 5px 0 4px; height: 21px; border-radius: 2px; background: #bfd8f2; }
    .prop { flex: 1; margin-top: 5px; }
    .prop .thumb { right: 4px; top: 42px; height: 360px; }
    table { border-collapse: separate; border-spacing: 0; table-layout: fixed; }
    td, th { padding: 0; font-weight: normal; }
    .ptable { width: 284px; margin-top: 2px; }
    .ptable th { height: 24px; background: #ebebed; border-right: 1px solid #d2d2d4; border-bottom: 1px solid #d2d2d4; text-align: center; }
    .ptable .strong { font-weight: bold; }
    .ptable .sect th { height: 24px; text-align: left; padding-left: 8px; border: 0; }
    .sect .caret { margin: 0 7px 2px 0; }
    .ptable td { height: 25px; }
    .ptable label { display: block; padding-left: 15px; color: #1a5cff; white-space: nowrap; }
    .ptable .plain label { color: #2d2d2d; }
    .val { display: flex; align-items: center; width: 141px; height: 21px; border: 1px solid #d8d8da; padding: 0 3px; outline: 0; text-align: left; }
    .ghost .val { color: #8c8c8c; }
    .dot { display: block; width: 8px; height: 8px; border-radius: 50%; border: 1px solid #b8b8bc; background: #dcdce0; margin: 0 auto; }
    .foot { height: 31px; padding: 4px 6px; flex: none; }
    .plainbtn { height: 25px; border: 1px solid #c6c6c8; border-radius: 3px; background: #fff; padding: 0 9px; }
    .disp .plainbtn { padding: 0 8px; }

    .view { position: relative; flex: 1; min-width: 0; background: #000; overflow: hidden; }
    .view > svg { width: 100%; height: 100%; }
    .ln { fill: none; stroke-width: 1; shape-rendering: crispEdges; }
    .rd { stroke: #d40000; } .dr { stroke: #700000; } .gr { stroke: #008000; }
    .mt { font-size: 17px; fill: #fff; text-anchor: middle; }
    .mt.ax { font-size: 14px; fill: #e00; } .mt.ay { fill: #0d0; }
    .rail { position: absolute; top: 1px; right: 0; width: 33px; bottom: 180px; background: #fff; border-radius: 3px 3px 0 0; display: flex; flex-direction: column; align-items: center; gap: 9px; padding: 12px 2px 0 0; }
    .rail svg * { fill: none; stroke: #4a5468; } .rail svg .b { stroke: #2078e8; } .rail svg .bf { fill: #d4e6fb; } .rail svg text { fill: #2078e8; stroke: none; font: bold 7px "Liberation Sans", sans-serif; }

    .disp { width: 289px; margin-left: 4px; flex: none; }
    .disp .grip { margin-right: 12px; }
    .dtabs { display: flex; align-items: flex-end; gap: 4px; height: 27px; padding-left: 2px; border-bottom: 1px solid #c8c8cc; flex: none; }
    .dtab { height: 21px; padding: 0 6px; background: #dcdcdd; border-radius: 3px 3px 0 0; }
    .dtab.on { height: 23px; background: #fff; border: 1px solid #c8c8cc; border-bottom: 0; color: #1a73e8; }
    .dwrap { margin: 2px 2px 0 2px; border: 1px solid #d0d0d2; flex: 1; min-height: 0; overflow: hidden; position: relative; }
    .dtable { width: 269px; }
    .dtable th, .dtable td { height: 21px; border-right: 1px solid #d8d8da; border-bottom: 1px solid #d8d8da; }
    .dtable td { text-align: center; }
    .tree { display: flex; height: 20px; }
    .tree i { width: 8px; border-right: 1px solid #dcdcde; } .tree i + i { width: 10px; }
    .tree b { width: 16px; height: 10px; border-bottom: 1px solid #dcdcde; margin-right: 6px; } .tree span { line-height: 21px; }
    .dwrap .thumb { right: 2px; top: 12px; height: 155px; }
    .dfoot { display: flex; justify-content: flex-end; padding: 6px 8px 7px; flex: none; }
    input[type="checkbox"] { appearance: none; display: block; width: 14px; height: 14px; margin: 0 auto; border: 1px solid #868686; border-radius: 2px; background: #fff; position: relative; }
    input[type="checkbox"]:disabled { background: #efefef; border-color: #b4b4b4; }
    input[type="checkbox"]:checked { background: #2b7de1; border-color: #2b7de1; }
    input[type="checkbox"]:checked::after { content: ""; position: absolute; left: 4px; top: 1px; width: 4px; height: 8px; border: solid #fff; border-width: 0 2px 2px 0; transform: rotate(40deg); }
    input[type="checkbox"]:indeterminate::after { content: ""; position: absolute; inset: 1px; background: #9cc9ff; border: 1px solid #3a8be8; }

    /* status bar */
    .status { display: flex; align-items: center; height: 31px; background: #fcfcfc; flex: none; padding-left: 2px; white-space: pre; }
    .status .s1 { width: 90px; } .status .s2 { width: 140px; } .status .s3 { width: 110px; }
    .sb { display: flex; align-items: center; justify-content: center; gap: 5px; width: 25px; height: 25px; border: 1px solid #9a9a9a; border-radius: 3px; background: #fff; }
    .sb.wide { width: 36px; } .sb.on { background: #d5e6fb; border-color: #2b7de1; }
    .sbs { display: flex; gap: 4px; margin-right: 15px; }

    /* windows */
    .win { position: absolute; background: #fff; display: flex; flex-direction: column; }
    .sect-win { left: 530px; top: 169px; width: 679px; border: 1px solid #c0c3c8; box-shadow: 0 0 8px rgba(0, 0, 0, .45); }
    .whead { display: flex; align-items: center; justify-content: space-between; font-size: 14px; height: 26px; padding: 1px 8px 0 18px; }
    .whead h2 { font: inherit; margin: 0; }
    .menu { display: flex; gap: 14px; align-items: center; height: 32px; padding: 2px 0 0 7px; border: solid #c3c6cb; border-width: 2px 1px; }
    .tools { display: flex; align-items: center; height: 33px; padding: 1px 2px 0; gap: 15px; border: 1px solid #c3c6cb; border-bottom: 0; }
    .tools .pickbtn { height: 22px; width: 35px; border-radius: 3px; background: #c3dbf4; }
    .tools .radios { display: flex; gap: 22px; align-items: center; height: 24px; border: solid #d8d8d8; border-width: 0 1px; padding: 0 6px 0 8px; margin: 0 -4px 0 -10px; }
    .radios label { display: flex; gap: 4px; align-items: center; color: #000; padding-bottom: 4px; }
    .tools .last { border-left: 1px solid #d8d8d8; padding-left: 12px; height: 24px; margin-left: -3px; }
    .tools .ln1 { display: flex; gap: 5px; align-items: center; margin-right: -3px; }
    input[type="radio"] { appearance: none; width: 15px; height: 15px; border: 1px solid #777; border-radius: 50%; background: #fff; }
    input[type="radio"]:checked { border-color: #2b7de1; background: radial-gradient(circle, #2b7de1 3px, #fff 4px); }
    .draft { position: relative; height: 409px; background: #000; }
    .draft > svg { width: 100%; height: 100%; }
    .info { position: absolute; left: 13px; top: 9px; display: flex; align-items: center; gap: 5px; color: #e8e8e8; }
    .info .box { display: flex; align-items: center; width: 135px; height: 26px; background: #fff; border: 1px solid #bbb; border-radius: 3px; color: #2d2d2d; padding: 0 5px 0 6px; }
    .st { font-family: "Liberation Mono", monospace; text-anchor: middle; }
    .sg { font-size: 34px; fill: #333c48; } .sgr { font-size: 25px; fill: #0f0; } .sgr .big { font-size: 38px; } .sw { font-size: 32px; fill: #fff; }
    .note { fill: #fff; font-size: 12px; } .note.mono { font: 10px "Liberation Mono", monospace; }
    .wfoot { display: flex; align-items: center; height: 31px; background: #fcfcfc; padding: 0 4px 0 3px; border-bottom: 1px solid #c0c3c8; }
    .size { width: 9px; height: 8px; margin: 14px 1px 0 auto; }
    .type-win { left: 1245px; top: 272px; width: 535px; padding: 0 11px 11px; border: 1px solid #b4b4b4; box-shadow: 3px 4px 12px rgba(0, 0, 0, .7); }
    .type-win .whead { height: 39px; padding: 0; margin-right: -4px; }
    .acts { display: flex; gap: 11px; align-items: center; height: 28px; border: 1px solid #c3c6cb; padding: 2px 5px 0; margin-bottom: 6px; }
    .acts button { display: flex; gap: 4px; align-items: center; }
    .body { display: flex; gap: 6px; }
    .side { display: flex; flex-direction: column; gap: 6px; width: 30px; }
    .side button { height: 76px; width: 30px; border: 1px solid #c8c8ca; background: #f0f0f0; writing-mode: vertical-rl; text-orientation: upright; line-height: 28px; letter-spacing: 5px; padding-top: 5px; color: #000; }
    .side button.on { color: #1787e0; }
    .list { position: relative; flex: 1; height: 458px; margin-top: 6px; border: 1px solid #c3c6cb; padding: 1px; display: grid; grid-template-columns: repeat(auto-fill, 153px); grid-auto-rows: 153px; }
    .cell { border: solid #d4d4d6; border-width: 0 1px 1px 0; padding: 5px 6px 0 5px; display: flex; }
    .cell.on { background: #9cc8ff; border: 3px solid #0d93fd; padding: 2px 3px 0 2px; height: 151px; width: 151px; }
    .cell svg { background: #007f7f; fill: none; stroke-width: 1; }
    .cell .tw { stroke: #fff; } .cell .tr { stroke: #f00; stroke-width: 2; }
    .cell text { fill: #fff; font-size: 12px; text-anchor: middle; }
    .list .thumb { right: 4px; top: 272px; height: 172px; }
    .okrow { display: flex; justify-content: flex-end; gap: 6px; padding-top: 6px; }
    .okrow button { width: 80px; height: 26px; border-radius: 3px; border: 1px solid #c6c6c8; }
    .okrow .ok { background: #2b7de1; border-color: #2b7de1; color: #fff; }

    /* taskbar */
    .task { display: flex; align-items: center; height: 40px; flex: none; border-top: 1px solid #1c3a58; box-shadow: inset 0 1px 0 rgba(255, 255, 255, .45);
      background: linear-gradient(115deg, transparent 36%, rgba(255, 255, 255, .14) 40%, transparent 41%, transparent 56%, rgba(255, 255, 255, .1) 60%, transparent 61%),
        linear-gradient(90deg, #134a7c 0, #1f679c 4%, #3a93c6 12%, #4fa9da 24%, #3a93cc 36%, #2d84c4 52%, #1f6db2 62%, #1d5c9c 75%, #194b86 88%, #163c6c 100%); }
    .orb { margin: 0 12px 0 8px; }
    .dots { width: 9px; height: 30px; background: radial-gradient(circle, #0c3050 1px, transparent 1px) 0 0 / 3px 3px; margin-right: 9px; }
    .appb { display: flex; align-items: center; justify-content: center; width: 59px; height: 38px; margin-right: 3px; border: 1px solid #1f5478; border-radius: 3px; background: linear-gradient(135deg, #a9d4ea, #4a9dc8 50%, #3d8fc0); box-shadow: inset 0 0 0 1px rgba(255, 255, 255, .5); }
    .appb.on { background: linear-gradient(135deg, #e6f4fb, #9ccfe8 50%, #7cbde0); }
    .tray { display: flex; align-items: center; gap: 8px; margin-left: auto; color: #fff; }
    .tray .dots { margin: 0 8px 0 0; }
    .clock { text-align: center; line-height: 18px; width: 72px; margin: 0 4px 0 2px; }
    .desk { width: 14px; height: 38px; border: 1px solid #7c9cc0; background: #2c5488; margin-left: 4px; }
  `;

  private cmd(x: Cmd) {
    return html`<button class=${classMap({ cmd: true, off: !!x.off })} ?disabled=${x.off}>${icon(x.i)}<span>${x.t}</span>${x.more ? caret : nothing}</button>`;
  }

  private top() {
    return html`
    <header class="title">
      <div class="quick">
        <svg class="logo" width="20" height="20" viewBox="0 0 20 20"><path fill="#1668f5" d="M1 7L13 1l5 2-1 4-3-1-1 14-5-3V8L3 10z"/><path fill="#555" d="M20 16v3h-3z"/></svg>
        ${["up", "newf", "open", "disk"].map((n) => html`<button aria-label=${n}>${icon(n)}</button>`)}
        <button class="pair" aria-label="undo">${icon("undo")}${caret}</button>
        <button class="pair off" aria-label="redo">${icon("redo")}${caret}</button>
        ${["sum", "q1", "q2", "q3", "pen", "fence", "frame"].map((n) => html`<button aria-label=${n}>${icon(n)}</button>`)}
        <svg width="8" height="8"><path stroke="#555" d="M1 1.500h6"/><path fill="#555" d="M1 4h6L4 7z"/></svg>
      </div>
      <h1>广联达BIM土建计量平台 GTJ2025 - [C:\\Users\\Administrator\\Desktop\\图形文件\\危废库工程.GTJ]</h1>
      <div class="wins">
        <button aria-label="最小化"><svg class="ic" width="16" height="16"><path class="k w2" d="M5 11.500h7"/></svg></button>
        <button aria-label="还原"><svg class="ic" width="16" height="16"><path class="k" d="M4.500 6.500h6v5h-6zM6.500 6V3.500h6v5H11"/></svg></button>
        <button aria-label="关闭"><svg class="ic" width="16" height="16"><path class="k w2" d="M4.500 4l7 7M11.500 4l-7 7"/></svg></button>
      </div>
    </header>
    <div class="tabs">
      <nav class="row-nav">${TABS.map((t) => html`<a href="#" class=${classMap({ tab: true, on: t === this.ribbonTab })} @click=${(e: Event) => { e.preventDefault(); this.ribbonTab = t; }}>${t}</a>`)}</nav>
      <div class="user">
        <div class="ask"><input aria-label="搜索功能" placeholder="请输入功能名称或问题描述">${icon("search", 12)}</div>
        <button class="row who"><svg width="16" height="16"><path fill="#9ccbfa" d="M0 0h16v16H0z"/><path fill="#fff" d="M4 5c0-5 8-5 8 0v1H4zM5 7h6c0 5-6 5-6 0zM2 16c0-5 12-5 12 0z"/></svg>杨华</button>
        <button aria-label="客服">${icon("headset")}</button>
        <button aria-label="日历"><svg width="16" height="16"><rect y="1" width="15" height="14" rx="2" fill="#e02020"/><path stroke="#fff" d="M0 4.500h15"/><path stroke="#fff" stroke-width="2" stroke-dasharray="2 2" d="M3 10h9"/></svg></button>
        <button class="row help" aria-label="帮助">?${caret}</button>
        <button aria-label="皮肤">${icon("shirt")}</button>
        <button aria-label="收起">${icon("chevup")}</button>
      </div>
    </div>
    <div class="ribbon">
      <div class="grp g1">
        <div class="cols">
          <button class="bigcmd"><svg width="24" height="28"><path d="M3.500 2.500v23l6-7h11z" fill="#d4e6fb" stroke="#2078e8" stroke-width="2"/></svg><span>选择</span></button>
          <div class="col">${[c("pick", "拾取构件"), c("batch", "批量选择"), c("byprop", "按属性选择", false, true)].map((x) => this.cmd(x))}</div>
          <div class="col">${[c("find", "查找图元"), c("filter", "过滤图元", true)].map((x) => this.cmd(x))}</div>
        </div>
        <div class="cap low">选择</div>
      </div>
      ${GROUPS.map((g) => html`<div class="grp ${g.cls}"><div class="cols">${g.cols.map((col) => html`<div class="col">${col.map((x) => this.cmd(x))}</div>`)}</div><div class="cap">${g.label}${caret}</div></div>`)}
      <div class="grp g5">
        <div class="cols">
          <div class="col"><button class="tool on" aria-label="点">${icon("point")}</button><button class="tool" aria-label="直线">${icon("line")}</button><button class="tool off" aria-label="弧">${icon("arc")}${caret}</button></div>
          <div class="col"><button class="tool" aria-label="圆">${icon("circle")}</button><button class="tool" aria-label="矩形">${icon("rect")}</button></div>
        </div>
        <div class="cap low">绘图</div>
      </div>
      <div class="grp g6">
        <div class="cols"><button class="bigcmd"><svg width="32" height="32" fill="none" stroke="#4a5468" stroke-width="2"><path d="M5 6h25M5 16h25M5 26h7M12 0v31M21 0v18"/><g fill="#fff"><circle cx="3" cy="6" r="2"/><circle cx="3" cy="16" r="2"/><circle cx="3" cy="26" r="2"/></g><rect x="17" y="19" width="13" height="12" rx="3" fill="#fff" stroke="#2078e8" stroke-dasharray="6 3"/><path stroke="#2078e8" d="M22.500 25h2"/></svg><span>智能布置</span>${caret}</button></div>
        <div class="cap low">智能布置</div>
      </div>
    </div>
    <div class="ctx">${["首层", "墙", "人防门框墙", "MKQ-1"].map((t) => html`<label class="pick"><select aria-label=${t}><option>${t}</option></select>${caret}</label>`)}</div>`;
  }

  private nav() {
    return html`<aside class="panel navp">
      <div class="phead"><span class="grip"></span><span class="grow">导航栏</span><button aria-label="关闭">${icon("close", 14)}</button></div>
      <div class="navlist">${NAV.map((g) => html`
        <button class=${classMap({ ngrp: true, on: g.name === "墙" })}><svg width="24" height="24">${ART[g.art]}</svg>${g.name}</button>
        ${g.items.map((i) => html`<a href="#" class=${classMap({ nitem: true, on: i.startsWith("人防") })}>${i}</a>`)}`)}
      </div><span class="thumb"></span>
    </aside>`;
  }

  private head(a: string, b: string) {
    return html`<div class="phead"><span class="grip"></span><button class="ptab on">${a}</button><button class="ptab">${b}</button><span class="grow"></span><button aria-label="关闭">${icon("close", 14)}</button></div>`;
  }

  private middle() {
    return html`<div class="mid">
      <section class="panel comp">${this.head("构件列表", "图纸管理")}
        <div class="bar">
          <div class="split"><button class="tb" aria-label="新建">${icon("newf")}</button><button class="tb narrow" aria-label="新建选项">${caret}</button></div>
          <button class="tb" aria-label="复制">${icon("copy")}</button><button class="tb" aria-label="删除">${icon("del")}</button>
          <button class="tb" aria-label="层间复制">${icon("copies")}</button><button class="tb" aria-label="存盘">${icon("tmpl")}</button>
          <button class="tb more" aria-label="更多"><svg width="8" height="6" fill="#4a5468"><path d="M0 0l4 3-4 3zM4 0l4 3-4 3z"/></svg></button>
        </div>
        <div class="find"><input aria-label="搜索构件" placeholder="搜索构件...">${icon("search", 14)}</div>
        <button class="tag">MKQ-1 &nbsp;&lt;0&gt;</button>
      </section>
      <section class="panel prop">${this.head("属性列表", "图层管理")}
        <table class="ptable">
          <colgroup><col style="width:101px"><col style="width:142px"><col style="width:41px"></colgroup>
          <thead><tr><th>属性名称</th><th class="strong">属性值</th><th>附加</th></tr><tr class="sect"><th colspan="3">${caret}基础属性</th></tr></thead>
          <tbody>${PROPS.map((p, n) => html`<tr class=${classMap({ plain: !!p.plain, ghost: !!p.ghost })}>
            <td><label for="p${n}">${p.k}</label></td>
            <td>${p.rebar
              ? html`<button class="val" id="p${n}">2<svg width="12" height="14" fill="none" stroke="#2d2d2d"><ellipse cx="6.500" cy="5" rx="4" ry="2.500"/><path d="M6.500 0v10M1 5h11M3 9.500h7"/></svg>16</button>`
              : html`<input class="val" id="p${n}" .value=${p.v}>`}</td>
            <td>${p.dot ? html`<span class="dot"></span>` : nothing}</td></tr>`)}</tbody>
        </table><span class="thumb"></span>
      </section>
      <div class="foot"><button class="plainbtn">组合参数图</button></div>
    </div>`;
  }

  private display() {
    return html`<aside class="panel disp">
      <div class="phead"><span class="grip"></span><span class="grow">显示设置</span><button aria-label="关闭">${icon("close", 14)}</button></div>
      <div class="dtabs"><button class="dtab on">图元显示</button><button class="dtab">楼层显示</button></div>
      <div class="dwrap"><table class="dtable">
        <colgroup><col style="width:143px"><col style="width:63px"><col style="width:63px"></colgroup>
        <thead><tr><th>图层构件</th><th>显示图元</th><th>显示名称</th></tr></thead>
        <tbody>${LAYERS.map((l, n) => html`<tr>
          <td><div class="tree"><i></i><i></i><b></b><span>${l.name}</span></div></td>
          <td><input type="checkbox" aria-label="显示图元 ${n + 1}" .checked=${l.shown === "1"} .indeterminate=${l.shown === "p"}></td>
          <td><input type="checkbox" aria-label="显示名称 ${n + 1}" ?disabled=${l.locked}></td></tr>`)}</tbody>
      </table><span class="thumb"></span></div>
      <div class="dfoot"><button class="plainbtn">恢复默认设置</button></div>
    </aside>`;
  }

  private sectionWindow() {
    const t = (s: string, off = false) => html`<button class=${off ? "off" : ""} ?disabled=${off}>${s}</button>`;
    return html`<section class="win sect-win" role="dialog" aria-label="截面编辑">
      <div class="whead"><h2>截面编辑</h2><button aria-label="关闭">${icon("close", 20)}</button></div>
      <div class="menu"><button>选择截面类型</button><button>保存为模板</button></div>
      <div class="tools">
        <button class="pickbtn">选择</button>
        <div class="radios"><label><input type="radio" name="bar" checked>纵筋</label><label><input type="radio" name="bar">箍筋</label></div>
        <button class="ln1">直线${caret}</button>
        ${t("隐藏标注")}${t("删除", true)}${t("清空钢筋")}${t("设置虚线边", true)}${t("设置对齐边")}<button class="last">对齐钢筋</button>
      </div>
      <div class="draft"><svg>${section()}</svg>
        <label class="info">钢筋信息:<span class="box"><select><option>C12@150</option></select>${caret}</span></label>
      </div>
      <div class="wfoot">
        <button class="sb" aria-label="正交">${icon("ortho")}</button><button class="sb on" aria-label="中点">${icon("slash")}</button><button class="sb on" aria-label="垂点">${icon("perp")}</button><button class="sb on" aria-label="动态输入">${icon("plusbar")}</button>
        <span>(X: 559 Y: 646)选择钢筋进行编辑，选择标注进行修改或移动;</span>
        <svg class="size" fill="#666"><path d="M6 0h2v2H6zM3 3h2v2H3zM6 3h2v2H6zM0 6h2v2H0zM3 6h2v2H3zM6 6h2v2H6z"/></svg>
      </div>
    </section>`;
  }

  private typeWindow() {
    return html`<section class="win type-win" role="dialog" aria-label="选择截面类型">
      <div class="whead"><h2>选择截面类型</h2><button aria-label="关闭">${icon("close", 20)}</button></div>
      <div class="acts">${[["newg", "新建"], ["delg", "删除"], ["impg", "导入"], ["expg", "导出"]].map(([i, s]) => html`<button class="off" disabled>${icon(i)}${s}</button>`)}</div>
      <div class="body">
        <div class="side"><button class="on">系统内置</button><button>自定义库</button></div>
        <div class="list">${THUMBS.map((s, n) => html`<button class=${classMap({ cell: true, on: n === this.picked })} @click=${() => { this.picked = n; }}>
          <svg width="140" height="140">${thumbArt(n)}<text x="70" y="133">${s}</text></svg></button>`)}<span class="thumb"></span></div>
      </div>
      <div class="okrow"><button class="ok">确定</button><button>取消</button></div>
    </section>`;
  }

  private bottom() {
    return html`<footer class="status">
      <span class="s1">层高： 3</span><span class="s2">标高： -0.15~2.85</span><span class="s3">选中图元：0</span><span class="s3">隐藏图元：0</span>
      <div class="sbs">
        <button class="sb" aria-label="正交">${icon("ortho")}</button><button class="sb wide on" aria-label="捕捉">${icon("snap")}${caret}</button>
        <button class="sb" aria-label="交点">${icon("cross")}</button><button class="sb wide" aria-label="角度">${icon("angle")}${caret}</button>
        <button class="sb wide" aria-label="动态输入">${icon("plusbark")}${caret}</button><button class="sb" aria-label="图层">${icon("layers")}</button><button class="sb" aria-label="折线">${icon("curve")}</button>
      </div>
      ${icon("expand", 18)}<span> 按鼠标左键指定插入点,按右键结束或 ESC 取消</span>
    </footer>
    <div class="task">
      <button class="orb" aria-label="开始"><svg width="37" height="37" viewBox="0 0 37 37"><defs><radialGradient id="o" cy=".8"><stop offset="0" stop-color="#5cc4ee"/><stop offset=".7" stop-color="#225c88"/><stop offset="1" stop-color="#16344e"/></radialGradient></defs><circle cx="18.500" cy="18.500" r="17.500" fill="url(#o)" stroke="#8fb4cc"/><path fill="#f0632a" d="M10 9c3-2 6-2 8 0l-2 8c-3-2-6-2-8 0z"/><path fill="#8cc63e" d="M19.500 9.500c3 2 6 2 9 0l-2 8c-3 2-6 2-9 0z"/><path fill="#38a8e8" d="M7.500 19c3-2 6-2 8 0l-2 8c-3-2-5-2-8 0z"/><path fill="#fccc32" d="M17 19.500c3 2 6 2 9 0l-2 8c-4 2-6 2-9 0z"/><path fill="#fff" opacity=".25" d="M3 15C5 0 32 0 34 15 24 10 13 10 3 15z"/></svg></button>
      <span class="dots"></span>
      ${APPS.map((a) => html`<button class=${classMap({ appb: true, on: !!a.on })} aria-label=${a.name}><svg width="32" height="32">${a.art}</svg></button>`)}
      <div class="tray">
        <span class="dots"></span>
        <svg width="16" height="16" fill="none" stroke="#ddd"><path d="M1 6.500h14v8H1zM6 6V3h5l2-2"/><path stroke-dasharray="1 1" d="M2 9h12M2 11h12M4 13h8"/></svg>
        <svg width="16" height="16"><circle cx="8" cy="8" r="7.500" fill="#1c2fb8" stroke="#c8c8c8"/><text x="8" y="12" text-anchor="middle" fill="#fff" font-size="11" font-weight="bold">?</text></svg>
        <svg width="12" height="20" fill="none" stroke="#fff"><path d="M3 .500h6v4H3zM1 3.500h5v4H1z"/><path fill="#fff" d="M2 14h7l-3.500 3z"/></svg>
        ${TRAY.map((a) => html`<button aria-label=${a.name}><svg width="16" height="16" viewBox="0 0 32 32">${a.art}</svg></button>`)}
        <div class="clock">16:35<br>2024/10/27</div>
        <svg width="16" height="16"><path fill="#fff" d="M0 1h16v14H0z"/><path fill="#16304e" d="M6 5l5 3-5 3z"/></svg>
        <button class="desk" aria-label="显示桌面"></button>
      </div>
    </div>`;
  }

  render() {
    return html`<div class="app">
      ${this.top()}
      <main class="work">
        ${this.nav()}${this.middle()}
        <div class="view"><svg>${modelView()}</svg>
          <div class="rail">
            <svg width="20" height="20"><circle cx="10" cy="10" r="8"/><ellipse class="b" cx="10" cy="10" rx="10" ry="4" transform="rotate(-35 10 10)"/></svg>
            <svg width="20" height="20"><path d="M1 5.500h13v14H1zM1 5l4-4h14l-5 4.500M19 1v14l-5 4"/><text x="3" y="15">3D</text></svg>
            <svg width="20" height="20"><path d="M1 5.500h13v14H1zM19 1v14l-5 4"/><path class="b bf" d="M1 5l4-4h14l-5 4.500z"/></svg>
          </div>
        </div>
        ${this.display()}
      </main>
      ${this.bottom()}
      ${this.sectionWindow()}${this.typeWindow()}
    </div>`;
  }
}
